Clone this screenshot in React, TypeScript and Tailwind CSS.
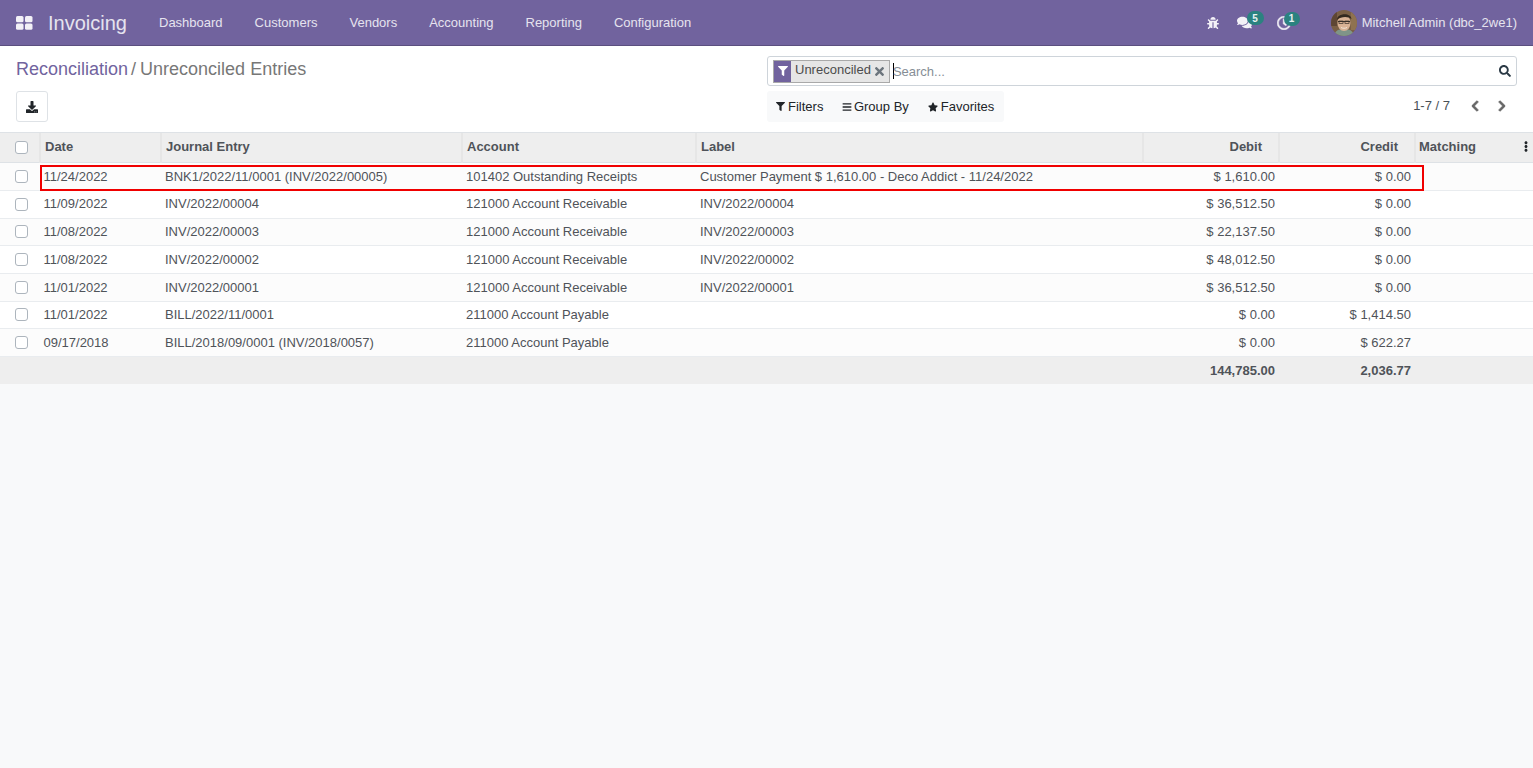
import { FaBug, FaComments, FaRegClock, FaDownload, FaFilter, FaBars, FaStar, FaTimes, FaSearch, FaChevronLeft, FaChevronRight, FaEllipsisV } from "react-icons/fa"

const menus = ["Dashboard", "Customers", "Vendors", "Accounting", "Reporting", "Configuration"]

const rows = [
  ["11/24/2022", "BNK1/2022/11/0001 (INV/2022/00005)", "101402 Outstanding Receipts", "Customer Payment $ 1,610.00 - Deco Addict - 11/24/2022", "$ 1,610.00", "$ 0.00"],
  ["11/09/2022", "INV/2022/00004", "121000 Account Receivable", "INV/2022/00004", "$ 36,512.50", "$ 0.00"],
  ["11/08/2022", "INV/2022/00003", "121000 Account Receivable", "INV/2022/00003", "$ 22,137.50", "$ 0.00"],
  ["11/08/2022", "INV/2022/00002", "121000 Account Receivable", "INV/2022/00002", "$ 48,012.50", "$ 0.00"],
  ["11/01/2022", "INV/2022/00001", "121000 Account Receivable", "INV/2022/00001", "$ 36,512.50", "$ 0.00"],
  ["11/01/2022", "BILL/2022/11/0001", "211000 Account Payable", "", "$ 0.00", "$ 1,414.50"],
  ["09/17/2018", "BILL/2018/09/0001 (INV/2018/0057)", "211000 Account Payable", "", "$ 0.00", "$ 622.27"],
]

function Check() {
  return <span className="block mx-auto h-[13px] w-[13px] rounded-[3px] border border-[#adb5bd] bg-white" />
}

function Avatar() {
  return (
    <svg viewBox="0 0 26 26" className="h-[26px] w-[26px] rounded-full">
      <rect width="26" height="26" fill="#7a5f45" />
      <rect x="20" y="0" width="6" height="20" fill="#8f7250" />
      <rect x="0" y="0" width="6" height="16" fill="#5e4634" />
      <path d="M3 26c1-6 5-7 10-7s9 1 10 7z" fill="#7f9488" />
      <ellipse cx="13" cy="13" rx="6.5" ry="8" fill="#d9b295" />
      <path d="M6 10c-.5-7 14-8 14.500-1-3-2.500-10-3-14.500 1z" fill="#33291f" />
      <path d="M7 11.500h12" stroke="#3a3028" strokeWidth="1" />
      <rect x="8" y="11" width="4" height="2.500" fill="none" stroke="#3a3028" strokeWidth=".7" />
      <rect x="14" y="11" width="4" height="2.500" fill="none" stroke="#3a3028" strokeWidth=".7" />
      <path d="M10 17.500c1.500 1 4.500 1 6 0" stroke="#f3e6da" strokeWidth="1" fill="none" />
    </svg>
  )
}

export default function App() {
  return (
    <div className="relative flex h-[768px] flex-col overflow-hidden bg-[#f8f9fa] font-['Liberation_Sans',sans-serif] text-[13px] text-[#4f5359]">
      <header className="flex h-[46px] shrink-0 items-center border-b border-[#5b4f7f] bg-[#71639e] text-[#e6e3ef]">
        <svg viewBox="0 0 17 14" className="ml-[16px] h-[14px] w-[17px]" fill="#f3f1f7">
          <rect x="0" y="0" width="7.5" height="6.2" rx="1.5" />
          <rect x="9" y="0" width="7.5" height="6.2" rx="1.5" />
          <rect x="0" y="7.6" width="7.5" height="6.2" rx="1.5" />
          <rect x="9" y="7.6" width="7.5" height="6.2" rx="1.5" />
        </svg>
        <span className="ml-[15px] w-[111px] text-[20px]">Invoicing</span>
        <nav className="flex gap-[32px]">
          {menus.map((m) => (
            <span key={m}>{m}</span>
          ))}
        </nav>
        <div className="ml-auto flex items-center pr-[16px]">
          <FaBug className="h-[12px] w-[12px] text-[#f3f1f7]" />
          <span className="relative ml-[18px] block">
            <FaComments className="h-[15px] w-[15px] text-[#f3f1f7]" />
            <span className="absolute left-[10px] top-[-4px] flex h-[14px] w-[17px] items-center justify-center rounded-full bg-[#2b8280] text-[10px] font-bold text-[#e8f1f1]">5</span>
          </span>
          <span className="relative ml-[25px] block">
            <FaRegClock className="h-[14px] w-[14px] stroke-current stroke-[20] text-[#f3f1f7]" />
            <span className="absolute left-[7px] top-[-4px] flex h-[14px] w-[16px] items-center justify-center rounded-full bg-[#2b8280] text-[10px] font-bold text-[#e8f1f1]">1</span>
          </span>
          <span className="ml-[40px]">
            <Avatar />
          </span>
          <span className="ml-[5px]">Mitchell Admin (dbc_2we1)</span>
        </div>
      </header>

      <section className="flex h-[87px] shrink-0 justify-between border-b border-[#dee2e6] bg-white pl-[16px] pr-[16px]">
        <div className="pt-[11px]">
          <div className="text-[18px] leading-[24px]">
            <span className="text-[#71639e]">Reconciliation</span>
            <span className="ml-[3px] mr-[4px] text-[#777777]">/</span>
            <span className="text-[#777777]">Unreconciled Entries</span>
          </div>
          <button className="mt-[10px] flex h-[31px] w-[32px] items-center justify-center rounded-[3px] border border-[#dee2e6] bg-white text-[#212529]">
            <FaDownload className="h-[12px] w-[12px]" />
          </button>
        </div>
        <div className="flex w-[750px] flex-col pt-[10px]">
          <div className="flex h-[30px] items-center rounded-[3px] border border-[#ced4da] bg-white pl-[5px] pr-[5px]">
            <span className="flex h-[23px] items-stretch border border-[#a9a9a9] bg-[#e6e6e6]">
              <span className="flex w-[17px] items-center justify-center bg-[#71639e] text-white">
                <FaFilter className="h-[10px] w-[10px]" />
              </span>
              <span className="flex items-center pl-[4px] pr-[4px] pb-[2px] text-[#4c4c4c]">Unreconciled</span>
              <span className="flex items-center pr-[5px] text-[#6c757d]">
                <FaTimes className="h-[13px] w-[9px]" />
              </span>
            </span>
            <span className="ml-[3px] -mr-px h-[16px] w-px bg-black" />
            <span className="pt-px text-[#868e96]">Search...</span>
            <FaSearch className="ml-auto h-[12px] w-[12px] text-[#2b3a46]" />
          </div>
          <div className="mt-[5px] flex items-start justify-between">
            <div className="flex h-[31px] w-[237px] items-center gap-[19px] rounded-[3px] bg-[#f8f9fa] pl-[9px] text-[#212529]">
              <span className="flex items-center gap-[3px]">
                <FaFilter className="h-[9px] w-[9px]" />
                Filters
              </span>
              <span className="flex items-center gap-[1.5px]">
                <FaBars className="h-[10px] w-[10px]" />
                Group By
              </span>
              <span className="flex items-center gap-[3px]">
                <FaStar className="h-[10px] w-[10px]" />
                Favorites
              </span>
            </div>
            <div className="flex items-center pr-[11px] pt-[5px] text-[#495057]">
              <span>1-7 / 7</span>
              <FaChevronLeft className="ml-[21px] h-[12px] w-[8px] stroke-current stroke-[40] text-[#666666]" />
              <FaChevronRight className="ml-[19px] h-[12px] w-[8px] stroke-current stroke-[40] text-[#666666]" />
            </div>
          </div>
        </div>
      </section>

      <table className="w-[1533px] table-fixed border-collapse">
        <colgroup>
          <col className="w-[40px]" />
          <col className="w-[121px]" />
          <col className="w-[301px]" />
          <col className="w-[234px]" />
          <col className="w-[447px]" />
          <col className="w-[136px]" />
          <col className="w-[136px]" />
          <col className="w-[118px]" />
        </colgroup>
        <thead>
          <tr className="h-[29.7px] border-b border-[#dee2e6] bg-[#eeeeee]">
            <th className="pl-[3px]"><Check /></th>
            <th className="border-l-2 border-[#e6e6e6] pb-[2px] pl-[4px] text-left font-bold">Date</th>
            <th className="border-l-2 border-[#e6e6e6] pb-[2px] pl-[4px] text-left font-bold">Journal Entry</th>
            <th className="border-l-2 border-[#e6e6e6] pb-[2px] pl-[4px] text-left font-bold">Account</th>
            <th className="border-l-2 border-[#e6e6e6] pb-[2px] pl-[4px] text-left font-bold">Label</th>
            <th className="border-l-2 border-[#e6e6e6] pb-[2px] pr-[16px] text-right font-bold">Debit</th>
            <th className="border-l-2 border-[#e6e6e6] pb-[2px] pr-[16px] text-right font-bold">Credit</th>
            <th className="border-l-2 border-[#e6e6e6] pb-[2px] pl-[3px] text-left font-bold">
              <div className="flex items-center justify-between pr-[5px]">
                Matching
                <FaEllipsisV className="h-[11px] w-[4px] text-[#212529]" />
              </div>
            </th>
          </tr>
        </thead>
        <tbody>
          {rows.map((r, i) => (
            <tr key={i} className={`h-[27.7px] border-b border-[#e9ecef] ${i % 2 === 0 ? "bg-[#fcfcfc]" : "bg-white"}`}>
              <td className="pl-[3px]"><Check /></td>
              <td className="pl-[3.5px]">{r[0]}</td>
              <td className="pl-[4px]">{r[1]}</td>
              <td className="pl-[4px]">{r[2]}</td>
              <td className="pl-[4px]">{r[3]}</td>
              <td className="pr-[4px] text-right">{r[4]}</td>
              <td className="pr-[4px] text-right">{r[5]}</td>
              <td />
            </tr>
          ))}
        </tbody>
        <tfoot>
          <tr className="h-[27.5px] bg-[#eeeeee] font-bold">
            <td colSpan={5} />
            <td className="pr-[4px] text-right">144,785.00</td>
            <td className="pr-[4px] text-right">2,036.77</td>
            <td />
          </tr>
        </tfoot>
      </table>

      <div className="absolute left-[40px] top-[165px] h-[26px] w-[1384px] border-2 border-[#f00000]" />
    </div>
  )
}
